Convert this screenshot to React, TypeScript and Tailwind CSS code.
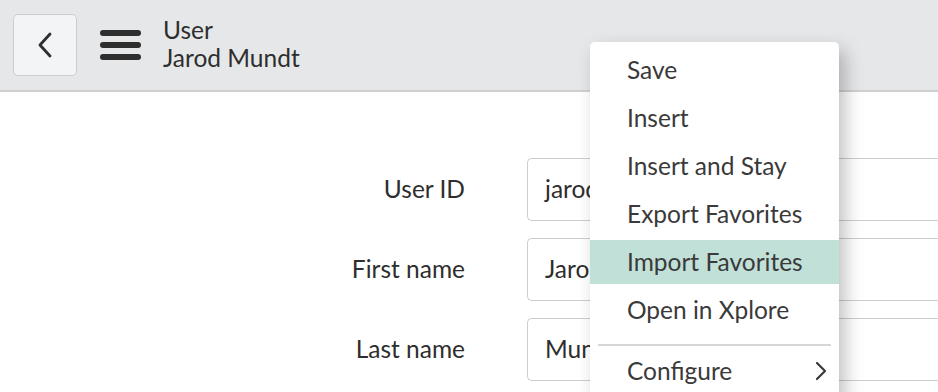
import React from "react";

const font = { fontFamily: "Lato, 'Open Sans', sans-serif" };

export default function App() {
  const items = ["Save", "Insert", "Insert and Stay", "Export Favorites", "Import Favorites", "Open in Xplore"];
  return (
    <div className="relative w-[938px] h-[392px] overflow-hidden bg-white text-[#2e2e2e]" style={font}>
      {/* Header */}
      <div className="h-[92px] bg-[#e6e7e9] border-b-2 border-[#cfd0d2] flex items-center">
        <button className="ml-[13px] w-[64px] h-[62px] rounded-[5px] border border-[#cdcdcd] bg-[#f3f4f5] flex items-center justify-center">
          <svg width="16" height="26" viewBox="0 0 16 26" fill="none">
            <path d="M13 2 L3 13 L13 24" stroke="#2e2e2e" strokeWidth="2.8" strokeLinecap="round" strokeLinejoin="round" />
          </svg>
        </button>
        <svg className="ml-[23px]" width="41" height="30" viewBox="0 0 41 30">
          <rect x="0" y="0" width="41" height="6" rx="3" fill="#2e2e2e" />
          <rect x="0" y="12" width="41" height="6" rx="3" fill="#2e2e2e" />
          <rect x="0" y="24" width="41" height="6" rx="3" fill="#2e2e2e" />
        </svg>
        <div className="ml-[22px] flex flex-col leading-[28px] text-[24.5px] -mt-[2px]">
          <span>User</span>
          <span>Jarod Mundt</span>
        </div>
      </div>

      {/* Form */}
      <div className="flex flex-col gap-[17px] pt-[66px]">
        {[
          ["User ID", "jarod.mundt"],
          ["First name", "Jarod"],
          ["Last name", "Mundt"],
        ].map(([label, value]) => (
          <div key={label} className="flex items-center h-[63px]">
            <div className="w-[465px] text-right text-[24.5px]">{label}</div>
            <div className="ml-[62px] flex-1 h-[63px] border border-[#cdcdcd] rounded-l-[5px] border-r-0 flex items-center pl-[17px] text-[24.5px]">
              {value}
            </div>
          </div>
        ))}
      </div>

      {/* Menu */}
      <div className="absolute left-[590px] top-[42px] w-[249px] h-[360px] bg-white rounded-t-[5px] shadow-[6px_8px_18px_rgba(0,0,0,0.25)] pt-[6px] flex flex-col gap-[4px]">
        {items.map((it) => (
          <div
            key={it}
            className={`h-[44px] shrink-0 flex items-center pl-[37px] text-[24.5px] text-[#3a3a3a] ${it === "Import Favorites" ? "bg-[#c1e0d8]" : ""}`}
          >
            {it}
          </div>
        ))}
        <div className="mx-[8px] mt-[8px] border-t-2 border-[#d6d6d6]" />
        <div className="h-[50px] shrink-0 -mt-[4px] flex items-center justify-between pl-[37px] pr-[12px] text-[24.5px] text-[#3a3a3a]">
          <span>Configure</span>
          <svg width="12" height="20" viewBox="0 0 12 20" fill="none">
            <path d="M2 2 L10 10 L2 18" stroke="#3a3a3a" strokeWidth="2.2" strokeLinecap="round" strokeLinejoin="round" />
          </svg>
        </div>
      </div>
    </div>
  );
}
